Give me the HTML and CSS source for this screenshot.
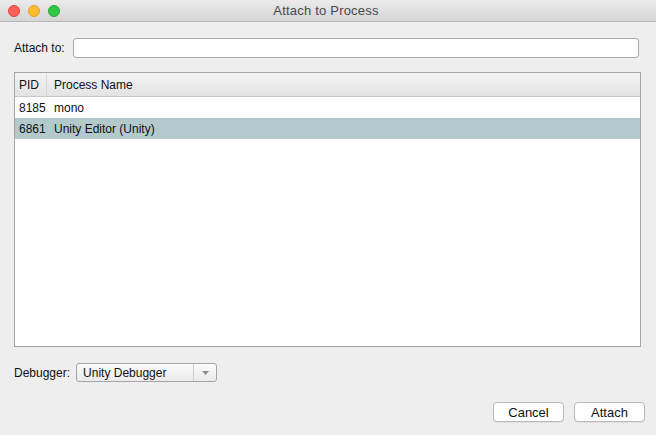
FILE: index.html
```html
<!DOCTYPE html>
<html lang="en">

<head>
    <meta charset="UTF-8">
    <meta name="viewport" content="width=device-width, initial-scale=1.0">
    <title>Attach to Process</title>
    <link rel="stylesheet" href="styles.css">
</head>

<body>

    <div class="window">
        <div class="titlebar">
            <div class="lights">
                <span class="light close"></span>
                <span class="light minimize"></span>
                <span class="light zoom"></span>
            </div>
            <div class="title">Attach to Process</div>
        </div>

        <div class="content">
            <div class="attach-row">
                <label for="filtro">Attach to:</label>
                <input type="text" id="filtro" class="filter">
            </div>

            <div class="process-list">
                <div class="row header">
                    <div class="col pid">PID</div>
                    <div class="col name">Process Name</div>
                </div>
                <div class="row">
                    <div class="col pid">8185</div>
                    <div class="col name">mono</div>
                </div>
                <div class="row selected">
                    <div class="col pid">6861</div>
                    <div class="col name">Unity Editor (Unity)</div>
                </div>
            </div>

            <div class="debugger-row">
                <span class="label">Debugger:</span>
                <div class="select">
                    <span class="select-text">Unity Debugger</span>
                    <span class="select-arrow">
                        <svg width="7" height="4" viewBox="0 0 7 4"><path d="M0 0h7L3.5 4z" fill="#8a8a8a"/></svg>
                    </span>
                </div>
            </div>

            <div class="buttons">
                <button type="button">Cancel</button>
                <button type="button">Attach</button>
            </div>
        </div>
    </div>

</body>

</html>
```

FILE: styles.css
```css
body {
    margin: 0;
    padding: 0;
    font-family: "Liberation Sans", Arial, sans-serif;
    font-size: 12px;
    color: #111;
    background-color: #eeeeee;
}

.window {
    width: 656px;
    height: 435px;
    background-color: #eeeeee;
    display: flex;
    flex-direction: column;
}

.titlebar {
    height: 22px;
    box-sizing: border-box;
    border-bottom: 1px solid #b8b8b8;
    background: linear-gradient(#ebebeb, #d5d5d5);
    display: flex;
    align-items: center;
    position: relative;
}

.lights {
    display: flex;
    gap: 8px;
    padding-left: 8px;
}

.light {
    width: 12px;
    height: 12px;
    border-radius: 50%;
    box-sizing: border-box;
}

.close {
    background-color: #fc5f57;
    border: 1px solid #e0443e;
}

.minimize {
    background-color: #fdbc2e;
    border: 1px solid #dea123;
}

.zoom {
    background-color: #33c748;
    border: 1px solid #27aa35;
}

.title {
    position: absolute;
    left: 0;
    right: 4px;
    text-align: center;
    font-size: 13px;
    color: #4a4a4a;
    letter-spacing: 0.2px;
}

.content {
    flex: 1;
    display: flex;
    flex-direction: column;
    padding: 16px 11px 0 14px;
}

.attach-row {
    display: flex;
    align-items: center;
    gap: 8px;
    padding-right: 6px;
}

.filter {
    flex: 1;
    height: 20px;
    box-sizing: border-box;
    border: 1px solid #a8a8a8;
    border-radius: 3px;
    background-color: #fff;
    margin: 0;
    padding: 0 4px;
    font-family: inherit;
    font-size: 12px;
}

.process-list {
    margin-top: 14px;
    margin-right: 4px;
    height: 275px;
    box-sizing: border-box;
    border: 1px solid #a5a5a5;
    background-color: #fff;
}

.row {
    display: flex;
    height: 21px;
    align-items: center;
}

.row.header {
    height: 24px;
    padding-top: 1px;
    box-sizing: border-box;
    border-bottom: 1px solid #c8c8c8;
    background: linear-gradient(#f3f3f3, #e3e3e3);
}

.row.selected {
    background-color: #b4c9cc;
}

.col.pid {
    width: 32px;
    padding-left: 4px;
    box-sizing: border-box;
}

.header .col.pid {
    height: 100%;
    display: flex;
    align-items: center;
    border-right: 1px solid #d6d6d6;
}

.col.name {
    padding-left: 7px;
}

.debugger-row {
    display: flex;
    align-items: center;
    gap: 6px;
    margin-top: 16px;
}

.select {
    width: 141px;
    height: 19px;
    box-sizing: border-box;
    border: 1px solid #a4a4a4;
    border-radius: 3px;
    background: linear-gradient(#fbfbfb, #eaeaea);
    display: flex;
    align-items: center;
}

.select-text {
    flex: 1;
    padding-left: 6px;
    font-size: 12px;
}

.select-arrow {
    width: 22px;
    height: 100%;
    border-left: 1px solid #cfcfcf;
    display: flex;
    align-items: center;
    justify-content: center;
}

.buttons {
    display: flex;
    justify-content: flex-end;
    gap: 10px;
    margin-top: 20px;
}

button {
    width: 71px;
    height: 20px;
    margin: 0;
    padding: 0;
    border: 1px solid #b9b9b9;
    border-radius: 4px;
    background-color: #fff;
    font-family: inherit;
    font-size: 13px;
    color: #111;
    box-shadow: 0 1px 0 rgba(0, 0, 0, 0.05);
}
```
